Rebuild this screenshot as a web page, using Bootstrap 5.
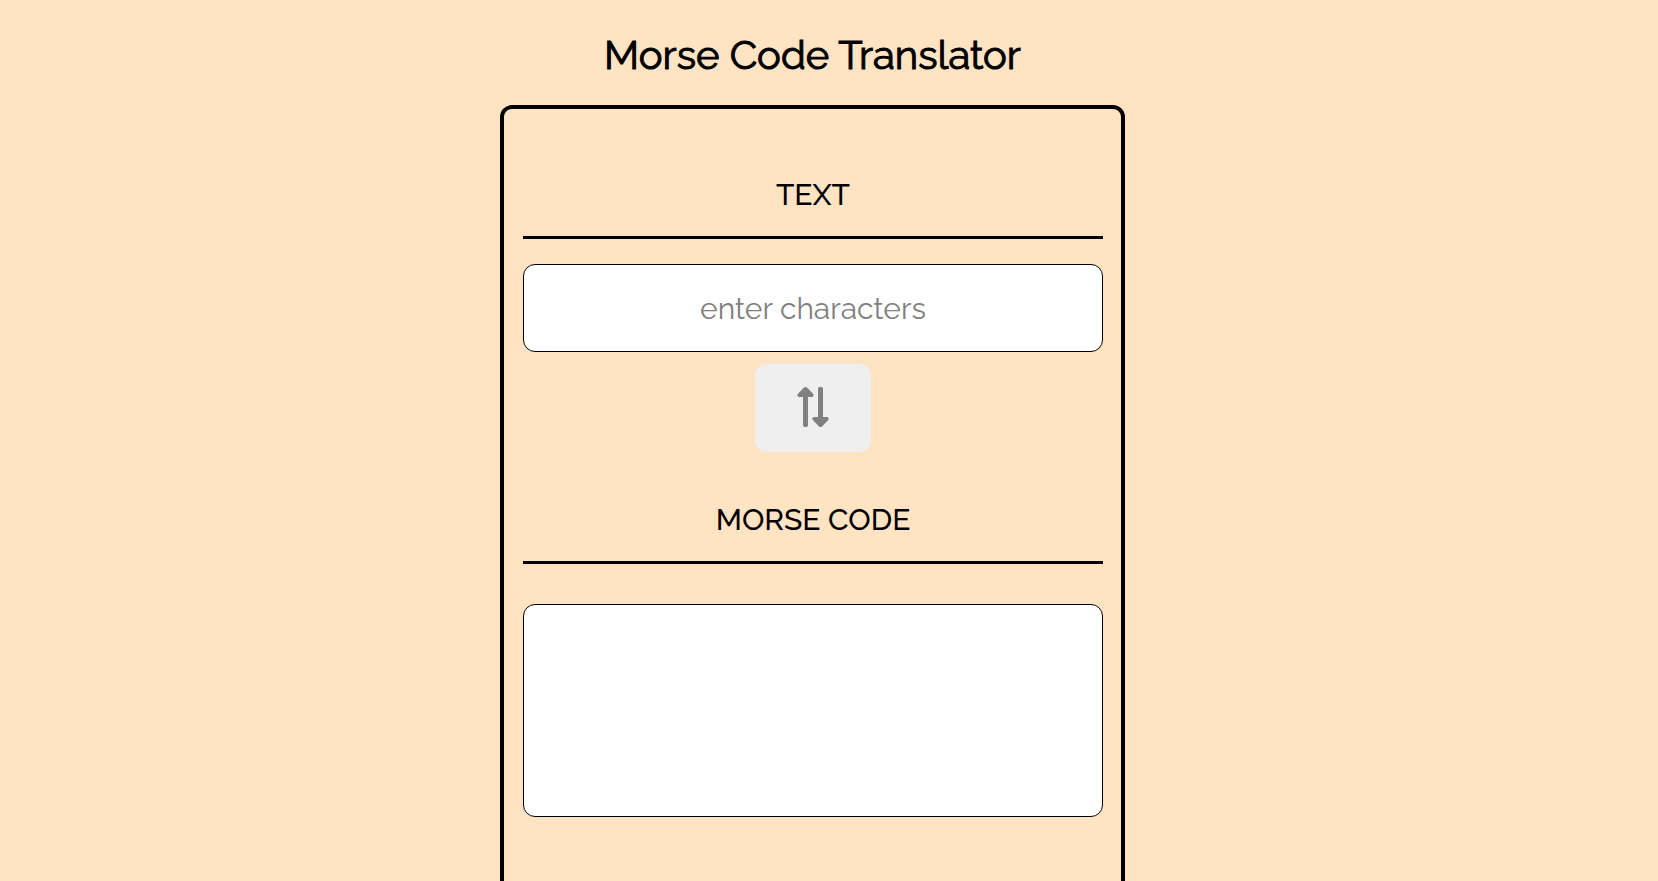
<!DOCTYPE html>
<html lang="en">
<head>
<meta charset="utf-8">
<meta name="viewport" content="width=device-width, initial-scale=1">
<title>Morse Code Translator</title>
<link rel="stylesheet" href="https://cdn.jsdelivr.net/npm/bootstrap@5.3.0/dist/css/bootstrap.min.css">
<style>
  body { background: #ffe4c4; color: #000; font-family: Raleway, Lato, sans-serif; }
  .page { padding: 31px 33px 32px 0; }
  .page-title { font-size: 40px; line-height: 48px; font-weight: 400; -webkit-text-stroke: 1px #000; margin-bottom: 26px; }
  .translator { max-width: 625px; border: 4px solid #000; border-radius: 12px; padding: 64px 18px 96px 19px; }
  .section-title { display: block; font-size: 30px; line-height: 44px; font-weight: 500; border-bottom: 3px solid #000; padding-bottom: 19px; }
  .field, .field:focus { height: 88px; border: 1px solid #000; border-radius: 12px; font-size: 30px; color: #000; background: #fff; box-shadow: none; }
  .field::placeholder { color: #808080; font-weight: 400; }
  .input-gap { margin-top: 25px; }
  .output-gap { margin-top: 40px; }
  .field.output { height: 213px; resize: none; }
  .swap { width: 116px; height: 88px; margin: 12px 0 46px; padding-bottom: 2px; border-radius: 12px; }
  .swap, .swap:hover { background: #efefef; color: #808080; border: 0; }
</style>
</head>
<body>
<main class="page">
  <h1 class="page-title text-center">Morse Code Translator</h1>
  <form class="translator mx-auto">
    <div class="d-flex flex-column align-items-center">
      <label class="section-title w-100 text-center" for="source">TEXT</label>
      <input class="field input-gap form-control text-center" id="source" type="text" placeholder="enter characters">
      <button class="swap btn px-0 pt-0 d-flex align-items-center justify-content-center" type="button" aria-label="Swap direction">
        <svg width="32" height="40" viewBox="0 0 32 40" fill="currentColor" aria-hidden="true">
          <path d="M7 .6Q8.500-.6 10 .6L15.800 6.400Q17 7.800 16.500 9Q16.100 10 14.800 10H11V38.300Q11 40 9.300 40H7.700Q6 40 6 38.300V10H2.200Q.9 10 .5 9Q0 7.800 1.200 6.400Z"/>
          <path d="M22 39.400Q23.500 40.600 25 39.400L30.800 33.600Q32 32.200 31.500 31Q31.100 30 29.800 30H26V1.700Q26 0 24.300 0H22.700Q21 0 21 1.700V30H17.200Q15.900 30 15.500 31Q15 32.200 16.200 33.600Z"/>
        </svg>
      </button>
      <label class="section-title w-100 text-center" for="result">MORSE CODE</label>
      <textarea class="field output output-gap form-control text-center" id="result" readonly></textarea>
    </div>
  </form>
</main>
<script src="https://cdn.jsdelivr.net/npm/bootstrap@5.3.0/dist/js/bootstrap.bundle.min.js"></script>
</body>
</html>
